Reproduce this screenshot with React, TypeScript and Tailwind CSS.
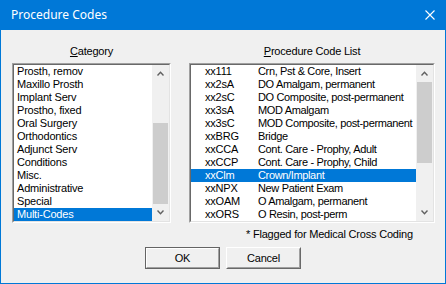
const categories = [
  "Prosth, remov",
  "Maxillo Prosth",
  "Implant Serv",
  "Prostho, fixed",
  "Oral Surgery",
  "Orthodontics",
  "Adjunct Serv",
  "Conditions",
  "Misc.",
  "Administrative",
  "Special",
  "Multi-Codes",
];

const codes = [
  ["xx111", "Crn, Pst & Core, Insert"],
  ["xx2sA", "DO Amalgam, permanent"],
  ["xx2sC", "DO Composite, post-permanent"],
  ["xx3sA", "MOD Amalgam"],
  ["xx3sC", "MOD Composite, post-permanent"],
  ["xxBRG", "Bridge"],
  ["xxCCA", "Cont. Care - Prophy, Adult"],
  ["xxCCP", "Cont. Care - Prophy, Child"],
  ["xxClm", "Crown/Implant"],
  ["xxNPX", "New Patient Exam"],
  ["xxOAM", "O Amalgam, permanent"],
  ["xxORS", "O Resin, post-perm"],
];

function Chevron({ up }: { up?: boolean }) {
  return (
    <svg width="7" height="5" viewBox="0 0 7 5">
      <path
        d={up ? "M0.5 4.5 L3.5 1.3 L6.5 4.5" : "M0.5 0.5 L3.5 3.7 L6.5 0.5"}
        fill="none"
        stroke="#606060"
        strokeWidth="1.4"
      />
    </svg>
  );
}

function ScrollBar({ atBottom }: { atBottom?: boolean }) {
  return (
    <div className="w-[17px] shrink-0 flex flex-col bg-[#f0f0f0]">
      <div className="h-[17px] flex items-center justify-center">
        <Chevron up />
      </div>
      <div className={`flex-1 flex flex-col px-[1px] ${atBottom ? "justify-end" : "justify-start"}`}>
        <div className="h-[81px] bg-[#cdcdcd]" />
      </div>
      <div className="h-[17px] flex items-center justify-center">
        <Chevron />
      </div>
    </div>
  );
}

function Sunken({ width, children }: { width: string; children: React.ReactNode }) {
  return (
    <div className={`${width} h-[160px] border border-t-[#a0a0a0] border-l-[#a0a0a0] border-b-white border-r-white`}>
      <div className="h-full border border-t-[#696969] border-l-[#696969] border-b-[#e3e3e3] border-r-[#e3e3e3] bg-white flex">
        {children}
      </div>
    </div>
  );
}

function Button({ label, isDefault }: { label: string; isDefault?: boolean }) {
  return (
    <div
      className={`w-[75px] h-[22px] border ${
        isDefault ? "border-[#646464]" : "border-t-white border-l-white border-b-[#696969] border-r-[#696969]"
      }`}
    >
      <div
        className={`h-full flex items-center justify-center bg-[#f0f0f0] border ${
          isDefault
            ? "border-t-white border-l-white border-b-[#a0a0a0] border-r-[#a0a0a0]"
            : "border-t-[#f0f0f0] border-l-[#f0f0f0] border-b-[#a0a0a0] border-r-[#a0a0a0]"
        }`}
      >
        {label}
      </div>
    </div>
  );
}

export default function App() {
  return (
    <div
      className="w-[446px] h-[284px] flex flex-col bg-[#f0f0f0] border-x border-b border-[#0078d7] text-[11px] tracking-[-0.2px] text-black"
      style={{ fontFamily: '"Liberation Sans", Arial, sans-serif' }}
    >
      {/* Title bar */}
      <div className="h-[30px] -mx-px bg-[#0078d7] flex items-center justify-between pl-[11px] pr-[11px] tracking-normal">
        <span className="text-white text-[12px]" style={{ fontFamily: '"Noto Sans", sans-serif' }}>
          Procedure Codes
        </span>
        <svg width="10" height="10" viewBox="0 0 10 10">
          <path d="M0.5 0.5 L9.5 9.5 M9.5 0.5 L0.5 9.5" stroke="white" strokeWidth="1.1" />
        </svg>
      </div>

      {/* Body */}
      <div className="flex-1 flex flex-col pt-[15px] px-[11px]">
        <div className="flex gap-[18px]">
          <div className="w-[159px] flex flex-col">
            <div className="h-[13px] leading-[13px] text-center mb-[5px]">
              <span className="underline underline-offset-1">C</span>ategory
            </div>
            <Sunken width="w-[159px]">
              <div className="flex-1 flex flex-col">
                {categories.map((c, i) => (
                  <div
                    key={c}
                    className={`h-[13px] leading-[13px] pl-[3px] whitespace-nowrap ${
                      i === categories.length - 1 ? "bg-[#0078d7] text-white" : ""
                    }`}
                  >
                    {c}
                  </div>
                ))}
              </div>
              <ScrollBar atBottom />
            </Sunken>
          </div>

          <div className="w-[246px] flex flex-col">
            <div className="h-[13px] leading-[13px] text-center mb-[5px]">
              <span className="underline underline-offset-1">P</span>rocedure Code List
            </div>
            <Sunken width="w-[246px]">
              <div className="flex-1 flex flex-col overflow-hidden">
                {codes.map(([code, desc]) => (
                  <div
                    key={code}
                    className={`h-[13px] leading-[13px] flex whitespace-nowrap ${
                      code === "xxClm" ? "bg-[#0078d7] text-white" : ""
                    }`}
                  >
                    <span className="w-[67px] shrink-0 pl-[14px]">{code}</span>
                    <span className="tracking-[-0.35px]">{desc}</span>
                  </div>
                ))}
              </div>
              <ScrollBar />
            </Sunken>
            <div className="h-[13px] leading-[13px] mt-[5px] pl-[57px]">* Flagged for Medical Cross Coding</div>
          </div>
        </div>

        <div className="flex justify-center gap-[6px] mt-[6px]">
          <Button label="OK" isDefault />
          <Button label="Cancel" />
        </div>
      </div>
    </div>
  );
}
